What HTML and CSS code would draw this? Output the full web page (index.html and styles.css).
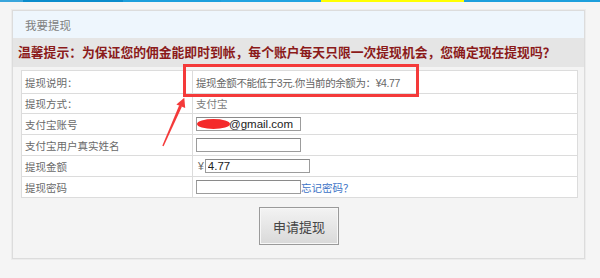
FILE: index.html
```html
<!DOCTYPE html>
<html lang="zh-CN">
<head>
<meta charset="utf-8">
<title>我要提现</title>
<link rel="stylesheet" href="styles.css">
</head>
<body>
<div class="topbar">
  <span class="seg s1"></span><span class="seg s2"></span><span class="seg s3"></span><span class="seg s4"></span><span class="seg s5"></span><span class="seg s6"></span>
</div>
<div class="panel">
  <div class="panel-head">我要提现</div>
  <div class="notice">温馨提示：为保证您的佣金能即时到帐，每个账户每天只限一次提现机会，您确定现在提现吗？</div>
  <div class="table">
    <div class="row r1"><div class="label">提现说明：</div><div class="value tight">提现金额不能低于3元.你当前的余额为：¥4.77</div></div>
    <div class="row r2"><div class="label">提现方式：</div><div class="value muted">支付宝</div></div>
    <div class="row"><div class="label">支付宝账号</div><div class="value"><span class="masked"><input class="field email" type="text" value="@gmail.com"><span class="blot"></span></span></div></div>
    <div class="row"><div class="label">支付宝用户真实姓名</div><div class="value"><input class="field" type="text"></div></div>
    <div class="row"><div class="label">提现金额</div><div class="value"><span class="yen">¥</span><input class="field amount" type="text" value="4.77"></div></div>
    <div class="row"><div class="label">提现密码</div><div class="value"><input class="field" type="password"><a class="forgot" href="#">忘记密码？</a></div></div>
  </div>
  <div class="actions"><button class="btn" type="button">申请提现</button></div>
</div>
<svg class="annot" width="600" height="278" viewBox="0 0 600 278" aria-hidden="true">
  <rect x="184.5" y="65.5" width="233" height="30" fill="none" stroke="#f43a3a" stroke-width="3"/>
  <polygon points="162.3,145.8 163.6,146.3 182,106.5 179.2,105.3" fill="#f43a3a"/>
  <polygon points="184.3,97.8 185.2,108 176.4,104.4" fill="#f43a3a"/>
</svg>
</body>
</html>
```

FILE: styles.css
```css
* { box-sizing: border-box; }
html, body { margin: 0; padding: 0; }
body {
  width: 600px;
  height: 278px;
  overflow: hidden;
  background: #f5f5f5;
  font-family: "Liberation Sans", "Noto Sans CJK SC", sans-serif;
  color: #666;
  position: relative;
}
.topbar { display: flex; height: 2px; }
.seg { display: block; height: 2px; }
.s1 { width: 23px; background: #3aa6dc; }
.s2 { width: 100px; background: #0b8ccc; }
.s3 { width: 98px; background: #1d9fdc; }
.s4 { width: 100px; background: #22a3e0; }
.s5 { width: 143px; background: #ffff00; }
.s6 { flex: 1; background: #1d9fdc; }

.panel {
  margin: 8px 0 0 12px;
  width: 573px;
  border: 1px solid #dcdcdc;
  box-shadow: 0 0 0 1px #ececec;
  background: #f4f4f4;
  padding-bottom: 13px;
}
.panel-head {
  height: 27px;
  padding: 4px 0 0 12px;
  background: #eef6fd;
  font-size: 11.5px;
  line-height: 23px;
  color: #808080;
}
.notice {
  height: 29px;
  padding: 1px 0 0 5px;
  background: #e5e5e5;
  font-size: 12.8px;
  line-height: 28px;
  font-weight: bold;
  color: #8b1a1a;
  white-space: nowrap;
}
.table {
  margin: 3px 6px 0 8px;
  border: 1px solid #dcdcdc;
  border-bottom: none;
  background: #fff;
}
.row {
  display: grid;
  grid-template-columns: 170px 1fr;
  height: 21px;
  border-bottom: 1px solid #dcdcdc;
  font-size: 10.5px;
}
.row.r1 { height: 23px; }
.row.r2 { height: 20px; }
.label, .value {
  display: flex;
  align-items: center;
  white-space: nowrap;
}
.label { padding-left: 3px; color: #6a6a6a; }
.value { padding-left: 3px; border-left: 1px solid #dcdcdc; color: #666; }
.value.tight { letter-spacing: -0.4px; }
.value.muted { color: #7a7a7a; }

.field {
  width: 105px;
  height: 14px;
  margin: 0;
  padding: 0 0 0 2px;
  border: 1px solid #9c9c9c;
  border-top-color: #8a8a8a;
  background: #fff;
  font-family: "Liberation Sans", "Noto Sans CJK SC", sans-serif;
  font-size: 11.5px;
  color: #222;
  outline: none;
}
.masked { position: relative; display: inline-block; height: 14px; }
.field.email { padding-left: 32px; display: block; }
.blot {
  position: absolute;
  left: 1px;
  top: 2px;
  width: 33px;
  height: 10px;
  border-radius: 50%;
  background: #f42a2a;
}
.yen { font-size: 10.5px; margin: 0 1px 0 2px; color: #666; }
.field.amount { width: 105px; }
.forgot {
  color: #3c72c6;
  text-decoration: none;
  font-size: 10.5px;
}

.actions {
  display: flex;
  justify-content: center;
  padding-top: 9px;
}
.btn {
  width: 80px;
  height: 38px;
  margin: 0 0 0 1px;
  border: 1px solid #9a9a9a;
  box-shadow: inset 0 0 0 1px #f7f7f7;
  background: linear-gradient(#f3f3f3, #d9d9d9);
  font-family: "Liberation Sans", "Noto Sans CJK SC", sans-serif;
  font-size: 13px;
  color: #444;
  padding: 0;
}
.annot { position: absolute; left: 0; top: 0; pointer-events: none; }
```
